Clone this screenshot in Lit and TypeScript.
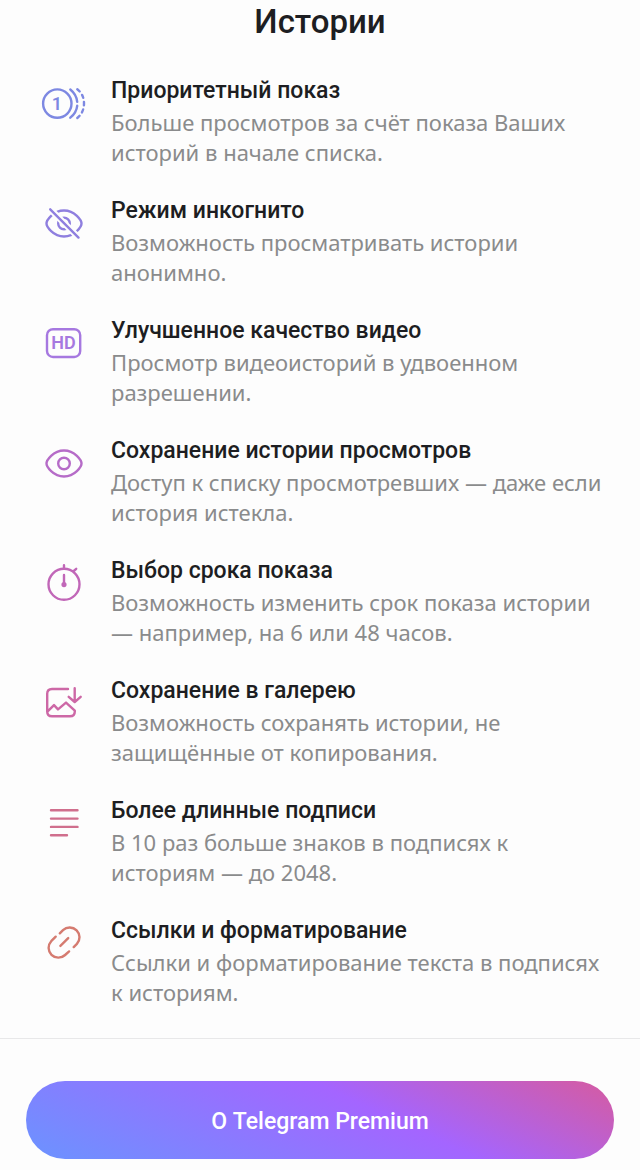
import { LitElement, html, css, svg } from "lit";
import { customElement } from "lit/decorators.js";
import { styleMap } from "lit/directives/style-map.js";

const eye = svg`<path d="M14.5 23.5C14.5 20.5 21 10.5 32 10.5S49.5 20.5 49.5 23.5 43 36.5 32 36.5 14.5 26.5 14.5 23.5z"/><circle cx="32" cy="23.5" r="5.8"/>`;

const features = [
  {
    color: "#7d88e2",
    title: "Приоритетный показ",
    text: "Больше просмотров за счёт показа Ваших историй в начале списка.",
    icon: svg`<circle cx="25.3" cy="23.6" r="14.2"/><text class="glyph" x="25" y="30">1</text><path d="M38.3 9.500Q44.500 14.500 45.200 21.800M45.200 25.800Q44.500 32.500 38.300 37.700"/><path class="dashed" d="M45.300 9.200Q52 14.500 52 23.500T45.300 38"/>`,
  },
  {
    color: "#8f7fdf",
    title: "Режим инкогнито",
    text: "Возможность просматривать истории анонимно.",
    icon: svg`<mask id="slash" maskUnits="userSpaceOnUse" x="0" y="0" width="64" height="48"><path d="M0 0h64v48H0z" fill="#fff" stroke="none"/><path d="M12 3l42 42" stroke="#000" stroke-width="6.5"/></mask><g mask="url(#slash)">${eye}</g><path d="M18.2 9.3l28.3 28.3"/>`,
  },
  {
    color: "#a678e0",
    title: "Улучшенное качество видео",
    text: "Просмотр видеоисторий в удвоенном разрешении.",
    icon: svg`<rect x="15" y="9.2" width="33.2" height="27.8" rx="6"/><text class="glyph" x="31.6" y="29.3">HD</text>`,
  },
  {
    color: "#b66cc8",
    title: "Сохранение истории просмотров",
    text: "Доступ к списку просмотревших — даже если история истекла.",
    icon: eye,
  },
  {
    color: "#c167b8",
    title: "Выбор срока показа",
    text: "Возможность изменить срок показа истории — например, на 6 или 48 часов.",
    icon: svg`<circle cx="32" cy="24.3" r="15.5"/><path d="M32 5.3v3M41.8 11l2.4-2.2M32 15v9"/><circle cx="32" cy="24.6" r="1.4" fill="currentColor"/>`,
  },
  {
    color: "#cd68a6",
    title: "Сохранение в галерею",
    text: "Возможность сохранять истории, не защищённые от копирования.",
    icon: svg`<path d="M36 9H20q-4.8 0-4.8 4.8V31.5q0 4.8 4.8 4.8H38q4.8 0 4.8-4.8V30.6L34 22.6l-8 6.8-4-4.3-6.6 6.6"/><path d="M42.7 8.3V21.7M36.7 16.8l6 5.2 6-5.2"/>`,
  },
  {
    color: "#d06f8d",
    title: "Более длинные подписи",
    text: "В 10 раз больше знаков в подписях к историям — до 2048.",
    icon: svg`<path d="M19 10.3H45.5M19 18.6H45.5M19 26.9H45.5M19 35.2H35"/>`,
  },
  {
    color: "#d57b70",
    title: "Ссылки и форматирование",
    text: "Ссылки и форматирование текста в подписях к историям.",
    icon: svg`<path d="M28.4 25.9l7.8-7.8M27.8 13.3l3.2-3.2a9.8 9.8 0 0 1 13.9 13.8l-3.2 3.2M23.7 16.700l-4.500 4.500a9.800 9.800 0 0 0 13.900 13.800l4-3.600"/>`,
  },
];

@customElement("app-root")
export class AppRoot extends LitElement {
  static styles = css`
    :host {
      display: block;
      min-height: 100vh;
      background: #fdfdfd;
      color: #1d1e22;
      font-family: Roboto, sans-serif;
    }
    .heading {
      margin: 0;
      padding-top: 1px;
      text-align: center;
      font-size: 33px;
      line-height: 42px;
      font-weight: 500;
    }
    .features {
      list-style: none;
      margin: 0;
      padding: 32px 24px 31px 32px;
      display: grid;
      gap: 28px;
    }
    .feature {
      display: grid;
      grid-template-columns: 64px 1fr;
      column-gap: 15px;
    }
    .icon {
      width: 64px;
      height: 48px;
      margin-top: 5px;
      fill: none;
      stroke: currentColor;
      stroke-width: 2.4;
      stroke-linecap: round;
      stroke-linejoin: round;
    }
    .dashed {
      stroke-dasharray: 3.2 4.2;
    }
    .glyph {
      fill: currentColor;
      stroke: none;
      font-size: 18px;
      font-weight: 600;
      text-anchor: middle;
    }
    .title {
      margin: 0;
      font-size: 23px;
      line-height: 32px;
      font-weight: 500;
    }
    .text {
      margin: 0;
      font-family: "Noto Sans", sans-serif;
      font-size: 22px;
      line-height: 30px;
      color: #8a8b8c;
    }
    .footer {
      border-top: 1px solid #e8e8e9;
      padding: 42px 26px 10px;
    }
    .about {
      display: block;
      width: 100%;
      height: 78px;
      padding: 3px 0 0;
      border: 0;
      border-radius: 39px;
      color: #fff;
      font: 500 23px/30px Roboto, sans-serif;
      background: linear-gradient(25deg, #6b93ff, #a465ff 60%, #d65ba0);
    }
  `;

  render() {
    return html`
      <main>
        <h1 class="heading">Истории</h1>
        <ul class="features">
          ${features.map(
            (f) => html`<li class="feature">
              <svg class="icon" viewBox="0 0 64 48" style=${styleMap({ color: f.color })} aria-hidden="true">${f.icon}</svg>
              <div>
                <h2 class="title">${f.title}</h2>
                <p class="text">${f.text}</p>
              </div>
            </li>`
          )}
        </ul>
      </main>
      <footer class="footer"><button class="about" type="button">О Telegram Premium</button></footer>
    `;
  }
}
